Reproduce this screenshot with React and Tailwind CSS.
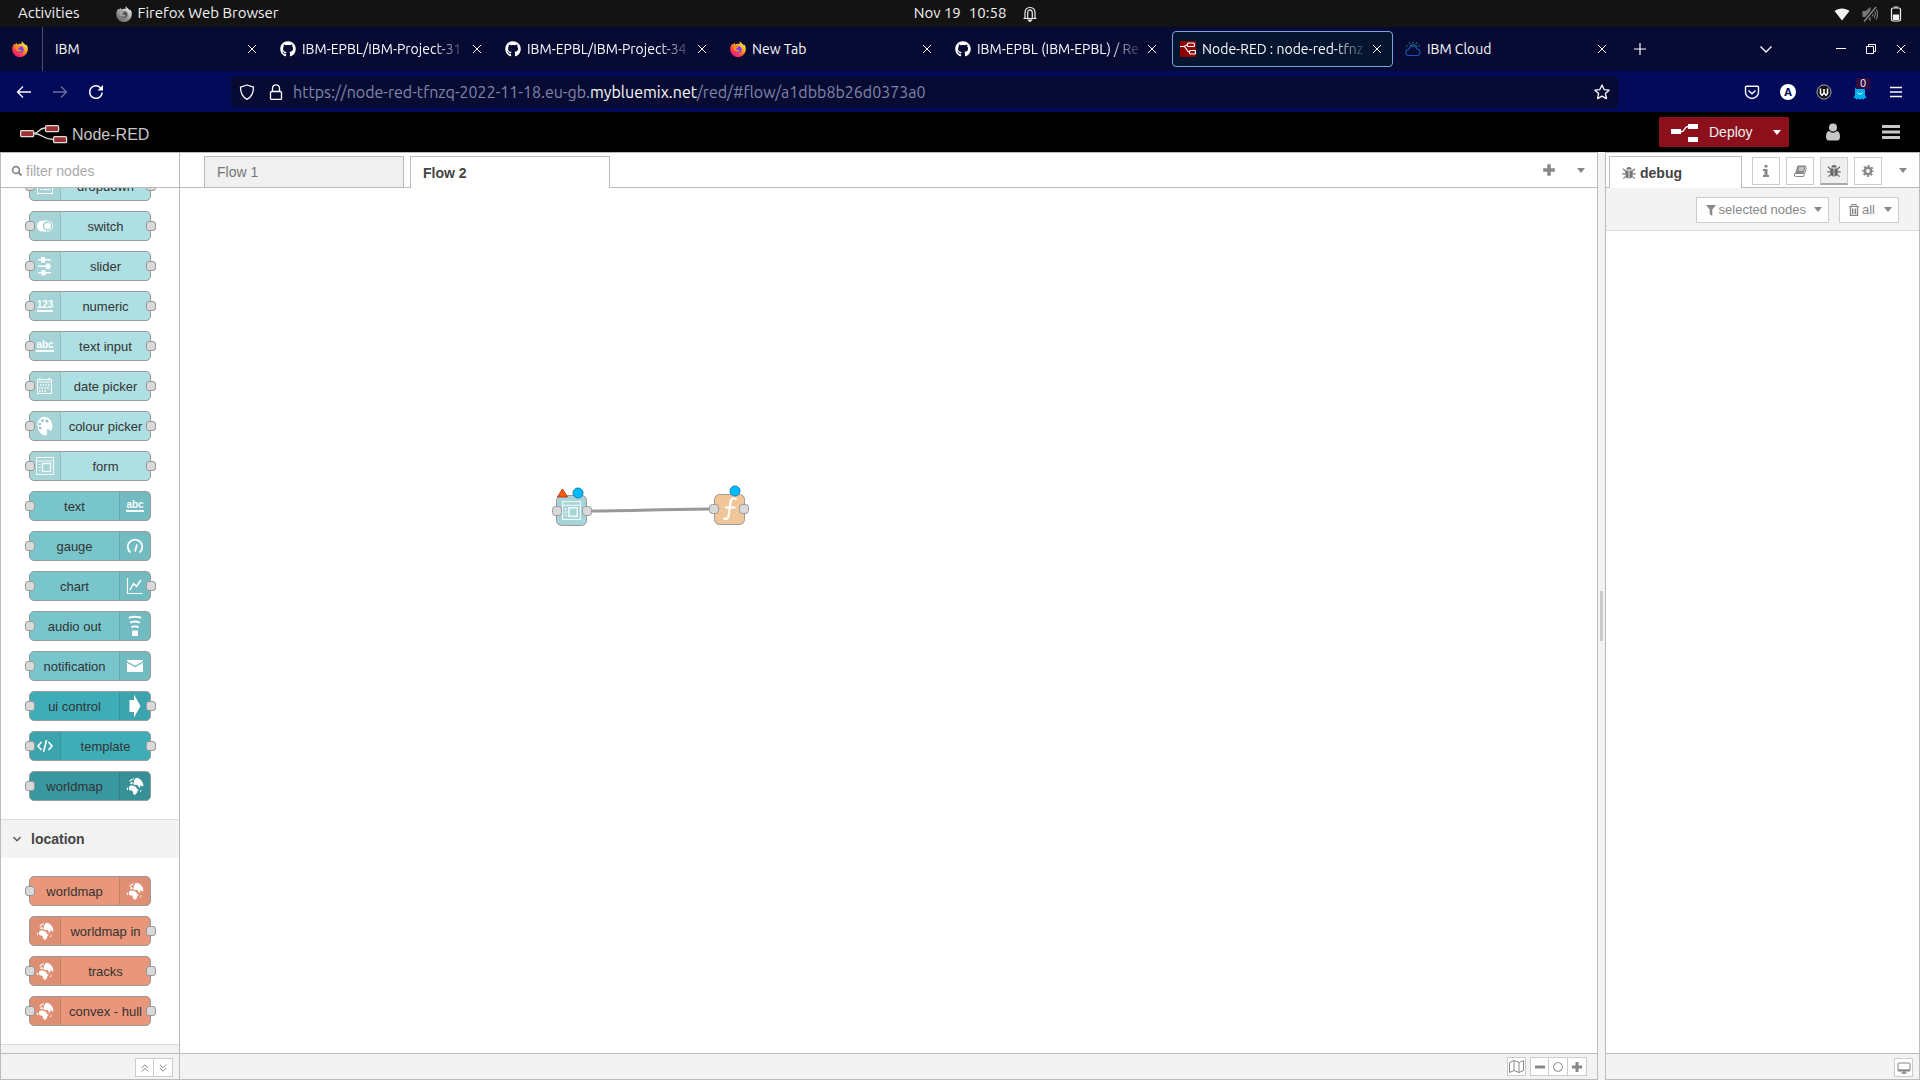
import React from 'react';
import { FaGithub, FaRegCircle } from 'react-icons/fa';

function Firefox({ gray }) {
  const id = gray ? 'fxg' : 'fxc';
  return (
    <svg viewBox="0 0 16 16" className="size-4 shrink-0" aria-hidden="true">
      <defs>
        <linearGradient id={id} x1="0.85" y1="0.1" x2="0.2" y2="0.95">
          <stop offset="0" stopColor={gray ? '#f2f2f2' : '#fff44f'} />
          <stop offset="0.4" stopColor={gray ? '#b0b0b0' : '#ff9a1f'} />
          <stop offset="0.75" stopColor={gray ? '#808080' : '#ff3750'} />
          <stop offset="1" stopColor={gray ? '#6a6a6a' : '#e31587'} />
        </linearGradient>
      </defs>
      <path
        fill={`url(#${id})`}
        d="M10 .2c-.6 1-.5 2 .2 2.9-.7-.3-1.600-.4-2.300-.4-1 0-1.600.3-2.200.8-.7-.3-1.200-.9-1.400-1.700-.6.6-.9 1.300-.9 2-.4-.3-.7-.6-.9-1C1 4.100.2 6.100.2 8.200.2 12.500 3.700 16 8 16s7.800-3.500 7.800-7.800c0-2-.6-3.800-1.600-4.900.1.600.1 1 0 1.400C13 2.800 10.700 2.300 10 .2z"
      />
      <circle cx="8.200" cy="8.600" r="3.400" fill={gray ? '#555' : '#7a3df0'} />
      <path
        fill={gray ? '#a5a5a5' : '#ff8a16'}
        d="M3.300 5.500c1-.6 2.100-.5 2.900 0 .9-.1 1.800.1 2 .5-.3.900-1.800.9-2 1.700.1.900 1 1.500 2.300 1.300.8-.1 1.300.2 1 .7-.6 1-2.700 1.400-4.200.4C3.800 9 3 7.300 3.300 5.500z"
      />
    </svg>
  );
}

function NodeRedFav() {
  return (
    <svg viewBox="0 0 16 16" className="size-4 shrink-0" aria-hidden="true">
      <rect width="16" height="16" rx="1" fill="#8f0000" />
      <g fill="none" stroke="#fff" strokeWidth="1.200">
        <path d="M0 5.500h3.500C6 5.500 6 3.500 8 3.500M3.500 5.500C7 5.500 6 11 9.500 11" />
        <rect x="7.500" y="2" width="7" height="3.500" rx="1" />
        <rect x="9.500" y="9.500" width="6" height="3.500" rx="1" />
      </g>
    </svg>
  );
}

function IbmCloud() {
  return (
    <svg viewBox="0 0 16 16" className="size-4 shrink-0" fill="none" strokeWidth="1.100" aria-hidden="true">
      <path stroke="#1455b5" d="M4 14.500a3 3 0 0 1-.5-6A4.500 4.500 0 0 1 12 8a3.300 3.300 0 0 1 .5 6.500z" />
      <path stroke="#18757c" d="M5 5.500A4 4 0 0 1 12 6M8 .5v1.800M4 1.500l.9 1.500M12 1.500 11.100 3M1 4.500l1.700.8M15 4.500l-1.700.8" />
    </svg>
  );
}

function Cross({ className }) {
  return (
    <svg viewBox="0 0 10 10" className={className} fill="none" stroke="currentColor" aria-hidden="true">
      <path d="M1 1l8 8M9 1l-8 8" />
    </svg>
  );
}

function Caret({ className }) {
  return (
    <svg viewBox="0 0 8 5" className={`h-[5px] w-2 shrink-0 ${className || ''}`} fill="currentColor" aria-hidden="true">
      <path d="M0 0h8L4 5z" />
    </svg>
  );
}

function Plus({ className }) {
  return (
    <svg viewBox="0 0 12 12" className={className} fill="currentColor" aria-hidden="true">
      <path d="M4.500 1h3v3.500H11v3H7.500V11h-3V7.500H1v-3h3.500z" />
    </svg>
  );
}

function Bug() {
  return (
    <svg viewBox="0 0 14 14" className="size-3.5 shrink-0" fill="currentColor" aria-hidden="true">
      <path d="M4.300 3.600a2.700 2.700 0 0 1 5.400 0z" />
      <path d="M3.300 4.500h3.300v8c-2 0-3.300-1.500-3.300-4zM7.400 4.500h3.300v4c0 2.500-1.300 4-3.300 4z" />
      <path fill="none" stroke="currentColor" strokeWidth="1.200" d="M1 2.800l2.700 2.400M13 2.800l-2.700 2.400M.3 7.800h3.200M13.700 7.800h-3.200M1.300 12.600l2.500-2.200M12.700 12.600l-2.500-2.200" />
    </svg>
  );
}

/* ---------- desktop bar ---------- */

function DesktopBar() {
  return (
    <header className="flex h-[27px] shrink-0 items-center bg-[#131313] text-[15px] text-[#f2f2f2]">
      <div className="flex flex-1 items-center pr-4 pl-[18px]">
        <button className="mr-9">Activities</button>
        <button className="flex items-center gap-1.5">
          <Firefox gray />
          Firefox Web Browser
        </button>
      </div>
      <button className="flex gap-2">
        <span>Nov 19</span>
        <span>10:58</span>
      </button>
      <div className="flex flex-1 items-center pr-[18px] pl-4">
        <svg viewBox="0 0 16 16" className="size-4" fill="none" stroke="#eee" strokeWidth="1.200" aria-label="Notifications">
          <path d="M1.500 12.500h13M3 12V7c0-3.500 2-5.500 5-5.500s5 2 5 5.500v5M5.700 12V7c0-2 .8-3.200 2.300-3.200s2.300 1.200 2.300 3.200v5" />
          <path d="M6.500 14h3L8 15.500z" fill="#eee" />
        </svg>
        <div className="ml-auto flex items-center gap-3">
          <svg viewBox="0 0 16 14" className="h-3.5 w-4" fill="#f2f2f2" aria-label="Wi-Fi">
            <path d="M8 13.500L.5 4C4.500.5 11.500.5 15.500 4z" />
          </svg>
          <svg viewBox="0 0 16 16" className="size-4" fill="none" stroke="#777" strokeWidth="1.200" aria-label="Muted">
            <path d="M1 5.500h3L8 2v12l-4-3.500H1z" fill="#777" />
            <path d="M10 5.500c1 1.500 1 3.500 0 5M12 4c1.700 2.500 1.700 5.500 0 8M14 2.500c2 3.500 2 7.500 0 11" />
            <path d="M2 15.500L14 1" stroke="#131313" strokeWidth="3.600" />
            <path d="M2 15.500L14 1" stroke="#888" strokeWidth="1.400" />
          </svg>
          <svg viewBox="0 0 12 16" className="h-4 w-3" fill="none" stroke="#f2f2f2" strokeWidth="1.200" aria-label="Battery">
            <rect x="1.500" y="2" width="9" height="13" rx="1.500" />
            <path d="M4 1h4M3.500 9h5v4.500h-5z" fill="#f2f2f2" />
          </svg>
        </div>
      </div>
    </header>
  );
}

/* ---------- browser chrome ---------- */

const github = <FaGithub className="size-4 shrink-0 text-white" />;
const TABS = [
  { title: 'IBM' },
  { title: 'IBM-EPBL/IBM-Project-31', icon: github, fade: true },
  { title: 'IBM-EPBL/IBM-Project-34', icon: github, fade: true },
  { title: 'New Tab', icon: <Firefox /> },
  { title: 'IBM-EPBL (IBM-EPBL) / Re', icon: github, fade: true },
  { title: 'Node-RED : node-red-tfnz', icon: <NodeRedFav />, fade: true, active: true },
  { title: 'IBM Cloud', icon: <IbmCloud /> },
];

function BrowserTab({ tab }) {
  return (
    <div
      className={`flex h-9 w-[221px] min-w-0 items-center rounded border pr-[7px] pl-[7px] ${
        tab.active ? 'border-[#7ba2e0] bg-[#05142f]' : 'border-transparent'
      }`}
    >
      <button className="flex min-w-0 flex-1 items-center gap-1.5 text-left">
        {tab.icon}
        <span
          className={`min-w-0 flex-1 overflow-hidden whitespace-nowrap ${
            tab.fade ? '[mask-image:linear-gradient(to_right,#000_calc(100%-36px),transparent)]' : ''
          }`}
        >
          {tab.title}
        </span>
      </button>
      <button aria-label="Close tab" className="grid size-4 shrink-0 place-items-center">
        <Cross className="size-2.5" />
      </button>
    </div>
  );
}

function TabStrip() {
  return (
    <div className="flex h-11 shrink-0 items-center bg-[#070b33] text-sm text-[#fbfbfe]">
      <button aria-label="Firefox View" className="grid h-full w-[43px] shrink-0 place-items-center border-r border-[#4b4e6e] pr-0.5">
        <Firefox />
      </button>
      <div className="ml-1 flex min-w-0 gap-1">
        {TABS.map((t, i) => (
          <BrowserTab key={i} tab={t} />
        ))}
      </div>
      <button aria-label="New tab" className="ml-4">
        <svg viewBox="0 0 12 12" className="size-3" stroke="currentColor" strokeWidth="1.200">
          <path d="M6 0v12M0 6h12" />
        </svg>
      </button>
      <div className="ml-auto flex items-center pr-3.5">
        <button aria-label="List all tabs" className="mr-16">
          <svg viewBox="0 0 12 12" className="size-3" fill="none" stroke="currentColor" strokeWidth="1.300">
            <path d="M.5 3.500L6 9l5.500-5.500" />
          </svg>
        </button>
        <div className="flex gap-5">
          <button aria-label="Minimise">
            <svg viewBox="0 0 10 10" className="size-2.5" stroke="currentColor">
              <path d="M0 4.500h10" />
            </svg>
          </button>
          <button aria-label="Restore">
            <svg viewBox="0 0 10 10" className="size-2.5" fill="none" stroke="currentColor">
              <path d="M.5 2.500h7v7h-7zM2.500 2.500v-2h7v7h-2" />
            </svg>
          </button>
          <button aria-label="Close window">
            <Cross className="size-2.5" />
          </button>
        </div>
      </div>
    </div>
  );
}

function NavBar() {
  return (
    <div className="flex h-[41px] shrink-0 items-center bg-[#030a5a] text-[#fbfbfe]">
      <div className="flex w-[231px] shrink-0 items-center gap-5 pl-4">
        <button aria-label="Back">
          <svg viewBox="0 0 16 16" className="size-4" fill="none" stroke="currentColor" strokeWidth="1.300">
            <path d="M15 8H1.500M7 2.500L1.500 8 7 13.500" />
          </svg>
        </button>
        <button aria-label="Forward" className="text-[#6c7099]">
          <svg viewBox="0 0 16 16" className="size-4" fill="none" stroke="currentColor" strokeWidth="1.300">
            <path d="M1 8h13.500M9 2.500L14.500 8 9 13.500" />
          </svg>
        </button>
        <button aria-label="Reload">
          <svg viewBox="0 0 16 16" className="size-4" fill="none" stroke="currentColor" strokeWidth="1.500">
            <path d="M14.200 8.500A6.300 6.300 0 1 1 12.500 3.700" />
            <path d="M15 1v5.500H9.500z" fill="currentColor" stroke="none" />
          </svg>
        </button>
      </div>
      <div className="flex h-8 w-[1387px] min-w-0 items-center rounded bg-[#070b33] pr-2 pl-2">
        <svg viewBox="0 0 16 16" className="mr-3 size-4 shrink-0" fill="none" stroke="currentColor" strokeWidth="1.300" aria-hidden="true">
          <path d="M8 1l6.500 2.200C14.500 9 12.500 13 8 15.300 3.500 13 1.500 9 1.500 3.200z" strokeLinejoin="round" />
        </svg>
        <svg viewBox="0 0 14 16" className="mr-2.5 ml-0.5 h-4 w-3.5 shrink-0" fill="none" stroke="currentColor" strokeWidth="1.300" aria-hidden="true">
          <rect x="1.500" y="7.500" width="11" height="8" rx="1.200" />
          <path d="M3.500 7.500V4.300a3.500 3.500 0 0 1 7 0v3.200" />
        </svg>
        <div role="textbox" aria-label="Address" className="min-w-0 flex-1 overflow-hidden text-base whitespace-nowrap text-[#8085a8]">
          https://node-red-tfnzq-2022-11-18.eu-gb.<span className="text-[#fbfbfe]">mybluemix.net</span>/red/#flow/a1dbb8b26d0373a0
        </div>
        <button aria-label="Bookmark">
          <svg viewBox="0 0 16 16" className="size-4" fill="none" stroke="currentColor" strokeWidth="1.300" strokeLinejoin="round">
            <path d="M8 1l2.100 4.600 5 .6-3.700 3.400 1 5L8 12.100l-4.400 2.500 1-5L.9 6.200l5-.6z" />
          </svg>
        </button>
      </div>
      <div className="ml-auto flex items-center gap-5 pr-4">
        <button aria-label="Pocket">
          <svg viewBox="0 0 16 16" className="size-4" fill="none" stroke="currentColor" strokeWidth="1.400">
            <path d="M1.500 3.300c0-.7.400-1.100 1.100-1.100h10.800c.7 0 1.100.4 1.100 1.100V8a6.500 6.500 0 0 1-13 0zM4.500 6.500L8 9.800l3.500-3.300" />
          </svg>
        </button>
        <button aria-label="Account" className="grid size-4 place-items-center rounded-full bg-white font-sans text-[11px] font-bold text-[#030a5a]">
          A
        </button>
        <button aria-label="Extension W">
          <svg viewBox="0 0 16 16" className="size-4" fill="none">
            <circle cx="8" cy="8" r="7" fill="#111" stroke="#aaa" />
            <path d="M4.500 4.500v5l1.500 1.700 2-2.200 2 2.200 1.500-1.700v-5M8 5v4" stroke="#fff" strokeWidth="1.600" />
          </svg>
        </button>
        <button aria-label="Ghostery" className="relative">
          <svg viewBox="0 0 16 16" className="size-4">
            <path fill="#00aef0" d="M3 6a5 5 0 0 1 10 0v5l1.500 3-2 .3-1 1.500-1.800-1.300L8 15.800l-1.700-1.300-1.800 1.300-1-1.500-2-.3L3 11z" />
            <path d="M5.500 8.500c1 2 4 2 5 0" stroke="#fff" fill="none" />
          </svg>
          <span className="absolute -top-1.5 left-1 h-[11px] w-3.5 bg-[#330a3f] text-center text-[11px] leading-[11px]">0</span>
        </button>
        <button aria-label="Menu">
          <svg viewBox="0 0 16 16" className="size-4" stroke="currentColor" strokeWidth="1.400">
            <path d="M2 3.500h12M2 8h12M2 12.500h12" />
          </svg>
        </button>
      </div>
    </div>
  );
}

/* ---------- Node-RED ---------- */

function AppHeader() {
  return (
    <div className="flex h-10 shrink-0 items-center bg-black text-[#c7c7c7]">
      <svg viewBox="0 0 50 20" className="mt-1 ml-5 h-5 w-[50px]" aria-hidden="true">
        <g fill="none" stroke="#ddd" strokeWidth="1.300">
          <path d="M13 9.500C20 9.500 18 4 25 4M13 9.500C24 9.500 22 15.500 33 15.500" />
          <g fill="#9c3133">
            <rect x=".6" y="6.600" width="13" height="6" rx="1.200" />
            <rect x="25.600" y="1.600" width="13" height="6" rx="1.200" />
            <rect x="33.600" y="12.600" width="13" height="6" rx="1.200" />
          </g>
        </g>
      </svg>
      <span className="mt-1.5 ml-0.5 text-base">Node-RED</span>
      <div className="ml-auto flex h-[30px] w-[130px] items-center bg-[#8c101c] text-sm text-[#eee]">
        <button className="flex h-full flex-1 items-center gap-2.5 pl-3">
          <svg viewBox="0 0 28 20" className="h-5 w-7" fill="#fff" aria-hidden="true">
            <path d="M0 7h10v5H0zM17 2h10v5H17zM17 15h10v5H17z" />
            <path d="M9 9.500h2C14 9.500 13 4.500 17 4.500" fill="none" stroke="#fff" strokeWidth="1.300" />
          </svg>
          Deploy
        </button>
        <button aria-label="Deploy options" className="h-full pr-2 pl-2">
          <Caret className="text-white" />
        </button>
      </div>
      <button aria-label="User" className="ml-[37px]">
        <svg viewBox="0 0 14 18" className="h-[18px] w-3.5" fill="currentColor">
          <path d="M0 13.500C0 10 1.300 8.300 3.300 8a5 5 0 0 0 7.400 0c2 .3 3.300 2 3.300 5.500 0 2.700-1 4-2.800 4H2.800C1 17.500 0 16.200 0 13.500z" />
          <circle cx="7" cy="4.500" r="4" />
        </svg>
      </button>
      <button aria-label="Main menu" className="mr-5 ml-[42px]">
        <svg viewBox="0 0 18 14" className="h-3.5 w-[18px]" fill="currentColor">
          <path d="M0 0h18v3H0zM0 5.500h18v3H0zM0 11h18v3H0z" />
        </svg>
      </button>
    </div>
  );
}

function TextGlyph({ children }) {
  return (
    <span className="border-b-2 border-white pb-px text-[10px] leading-[9px] font-bold text-white">{children}</span>
  );
}

const FormDrawing = (
  <g fill="none" stroke="#fff" opacity="0.85">
    <rect x="1.500" y="1.500" width="17" height="17" />
    <path d="M1.500 5h17" />
    <rect x="7.500" y="7.500" width="8" height="8" strokeWidth="1.400" />
    <path d="M3.500 8.500h2M3.500 11.500h2M3.500 14.500h2" strokeWidth="1.200" />
  </g>
);

const ICONS = {
  dropdown: (
    <svg viewBox="0 0 20 20" className="size-5" fill="none" stroke="#fff">
      <path d="M2.500 2.500h15v15h-15zM2.500 6h15M5 9.500h2M8 9.500h7M5 13.500h2M8 13.500h7" />
    </svg>
  ),
  switch: (
    <svg viewBox="0 0 20 20" className="size-5">
      <rect x="2" y="4.500" width="16" height="11" rx="5.500" fill="#fff" />
      <circle cx="12.500" cy="10" r="4" fill="none" stroke="#8cc4c8" strokeWidth="1.200" />
    </svg>
  ),
  slider: (
    <svg viewBox="0 0 20 20" className="size-5" fill="#fff">
      <path d="M3 3h13v1.500H3zM3 9.500h13V11H3zM3 16h13v1.500H3zM6 1h4v5.500H6zM11 7.500h4V13h-4zM6.500 14.200h4V19.500h-4z" />
    </svg>
  ),
  numeric: <TextGlyph>123</TextGlyph>,
  abc: <TextGlyph>abc</TextGlyph>,
  date: (
    <svg viewBox="0 0 20 20" className="size-5" fill="none" stroke="#fff">
      <path d="M2.500 3.500h14v14h-14zM2.500 6h14M5 1.500v2M14 1.500v2" />
      <path d="M5 9h10M4 12h11M4 15h8" strokeWidth="1.400" strokeDasharray="1.400 1.300" />
    </svg>
  ),
  palette: (
    <svg viewBox="0 0 20 20" className="size-5">
      <path
        fill="#fff"
        d="M9 .8c4.800 0 8.300 4.200 8.300 9.200 0 2.800-.8 4.700-1.800 4.700-1.200 0-1.300-1.700-2.600-1.700-1.200 0-1.300 1.500-.9 3.200.4 1.900-.1 3.200-1.800 3.200C6 19.400 2.500 14.500 2.500 9 2.500 4.500 5 .8 9 .8z"
      />
      <g fill="#8cc4c8">
        <circle cx="7.500" cy="4.600" r="1.400" />
        <circle cx="12" cy="5.200" r="1.400" />
        <circle cx="4.800" cy="8" r="1.300" />
        <circle cx="5.200" cy="12" r="1.300" />
      </g>
    </svg>
  ),
  form: (
    <svg viewBox="0 0 20 20" className="size-5">
      {FormDrawing}
    </svg>
  ),
  gauge: (
    <svg viewBox="0 0 20 20" className="size-5" fill="none" stroke="#fff" strokeWidth="1.800">
      <path d="M5.500 16.500A7.200 7.200 0 1 1 14.500 16.500" />
      <path d="M12 8.500L10 15.500" />
    </svg>
  ),
  chart: (
    <svg viewBox="0 0 20 20" className="size-5" fill="none" stroke="#fff" strokeWidth="1.500">
      <path d="M2.500 2v15.500h15" strokeWidth="1.200" />
      <path d="M5 14l3.500-6.500 3 3L16 4" />
    </svg>
  ),
  audio: (
    <svg viewBox="0 0 20 22" className="h-[22px] w-5" fill="none" stroke="#fff" strokeWidth="1.900">
      <rect x="7" y="15.500" width="6" height="5.500" rx="1" fill="#fff" stroke="none" />
      <path d="M4 3c2-1.700 10-1.700 12 0M5.200 7.700c1.800-1.700 7.800-1.700 9.600 0M6.500 12.500c1.500-1.500 5.500-1.500 7 0" />
    </svg>
  ),
  mail: (
    <svg viewBox="0 0 20 20" className="size-5" fill="#fff">
      <path d="M2 4h16v1.300L10 9.800 2 5.300zM2 6.800l8 4.500 8-4.500V16H2z" />
    </svg>
  ),
  arrow: (
    <svg viewBox="0 0 20 24" className="h-6 w-5" fill="#fff">
      <path d="M4.500 6H9V.5L15.500 12 9 23.500V18H4.500z" />
    </svg>
  ),
  code: (
    <svg viewBox="0 0 20 20" className="size-5" fill="none" stroke="#fff" strokeWidth="1.600">
      <path d="M6.500 6L3 10l3.500 4M13.500 6l3.500 4-3.500 4M11.500 4L8.500 16" />
    </svg>
  ),
  globe: (
    <svg viewBox="0 0 20 20" className="size-5" fill="#fff">
      <path d="M4 5.200L6 3.300l3-1.200-.6 1.300-1.600.6-1 1.500z" />
      <path d="M10.500 1.800c4.200 0 7.700 3.400 7.900 7.700l-1.200 1.300-1.200-1.500-1 .5.300 2-1.300-.4-1.200-2.200-1.800-.5-1.500.3-1.500-1 1-1.700-.3-1.800 1.500-1.200z" />
      <path d="M5.500 6.600l1.700-.7.8 1-1.300 1.300-1.400-.2z" />
      <path d="M4.300 10.300l2.500-1 2.200.6 2 .9 1.200 2.400h1.600l-1.500 2.300-.5 1.800-1.700 1.400-1.500-.2-.8-2.600-.8-1.400-2 .1-1.200-1.800z" />
      <path d="M1.500 11.300l1.300.8.500 1.900-1 .2zM15.200 14.800l1.300-1.200-.4 2-1.300 1z" />
    </svg>
  ),
};

const LIGHT = 'bg-[#aedfe2]';
const MID = 'bg-[#78c6cc]';
const TEAL = 'bg-[#3fadb7]';
const DEEP = 'bg-[#39989f]';
const SALMON = 'bg-[#e9967a]';

const DASHBOARD = [
  ['dropdown', LIGHT, 'dropdown', 'left', true, true],
  ['switch', LIGHT, 'switch', 'left', true, true],
  ['slider', LIGHT, 'slider', 'left', true, true],
  ['numeric', LIGHT, 'numeric', 'left', true, true],
  ['text input', LIGHT, 'abc', 'left', true, true],
  ['date picker', LIGHT, 'date', 'left', true, true],
  ['colour picker', LIGHT, 'palette', 'left', true, true],
  ['form', LIGHT, 'form', 'left', true, true],
  ['text', MID, 'abc', 'right', true, false],
  ['gauge', MID, 'gauge', 'right', true, false],
  ['chart', MID, 'chart', 'right', true, true],
  ['audio out', MID, 'audio', 'right', true, false],
  ['notification', MID, 'mail', 'right', true, false],
  ['ui control', TEAL, 'arrow', 'right', true, true],
  ['template', TEAL, 'code', 'left', true, true],
  ['worldmap', DEEP, 'globe', 'right', true, false],
];
const LOCATION = [
  ['worldmap', SALMON, 'globe', 'right', true, false],
  ['worldmap in', SALMON, 'globe', 'left', false, true],
  ['tracks', SALMON, 'globe', 'left', true, true],
  ['convex - hull', SALMON, 'globe', 'left', true, true],
];

function Port({ side }) {
  return (
    <span
      className={`absolute top-[9px] size-2.5 rounded-[3px] border border-[#999] bg-[#d9d9d9] ${
        side === 'in' ? '-left-[5px]' : '-right-[6px]'
      }`}
    />
  );
}

function PaletteNode({ node }) {
  const [label, color, icon, side, input, output] = node;
  return (
    <div className={`relative flex h-[30px] w-[122px] shrink-0 rounded-[5px] border border-[#999] ${color} ${side === 'right' ? 'flex-row-reverse' : ''}`}>
      <div
        className={`grid w-[31px] shrink-0 place-items-center bg-black/5 ${
          side === 'right' ? 'rounded-r border-l border-black/10' : 'rounded-l border-r border-black/10'
        }`}
      >
        {ICONS[icon]}
      </div>
      <div className="flex-1 text-center text-[13px] leading-[30px] whitespace-nowrap text-[#333]">{label}</div>
      {input && <Port side="in" />}
      {output && <Port side="out" />}
    </div>
  );
}

function Palette() {
  return (
    <aside className="flex w-[180px] shrink-0 flex-col border border-[#bbb]">
      <label className="flex h-[35px] shrink-0 items-center border-b border-[#bbb] pt-0.5 pl-2.5">
        <svg viewBox="0 0 12 12" className="size-3 shrink-0" fill="none" stroke="#888" strokeWidth="1.700" aria-hidden="true">
          <circle cx="5" cy="5" r="3.400" />
          <path d="M7.500 7.500L10.500 10.500" strokeWidth="2" />
        </svg>
        <input
          type="text"
          aria-label="filter nodes"
          placeholder="filter nodes"
          className="ml-[3px] w-full min-w-0 text-sm outline-none placeholder:text-[#aaa]"
        />
      </label>
      <div className="flex min-h-0 flex-1 flex-col overflow-hidden">
        <div className="-mt-[17px] flex flex-col items-center gap-2.5 pb-[18px]">
          {DASHBOARD.map((n) => (
            <PaletteNode key={n[0]} node={n} />
          ))}
        </div>
        <button className="flex h-[39px] shrink-0 items-center border-t border-[#ddd] bg-[#f3f3f3] pl-3 text-left text-sm font-bold text-[#444]">
          <svg viewBox="0 0 8 6" className="mr-2.5 h-1.5 w-2" fill="none" stroke="#555" strokeWidth="1.300" aria-hidden="true">
            <path d="M.5 1L4 4.700 7.500 1" />
          </svg>
          location
        </button>
        <div className="flex flex-col items-center gap-2.5 py-[18px]">
          {LOCATION.map((n) => (
            <PaletteNode key={n[0]} node={n} />
          ))}
        </div>
        <div className="min-h-0 flex-1 border-t border-[#ddd] bg-[#f3f3f3]" />
      </div>
      <footer className="flex h-[26px] shrink-0 items-center justify-end border-t border-[#bbb] bg-[#f3f3f3] pt-0.5 pr-1.5">
        <FootButton label="Collapse all">
          <svg viewBox="0 0 8 8" className="size-2" fill="none" stroke="currentColor">
            <path d="M.8 4L4 .8 7.200 4M.8 7.500L4 4.300l3.200 3.200" />
          </svg>
        </FootButton>
        <FootButton label="Expand all" joined>
          <svg viewBox="0 0 8 8" className="size-2" fill="none" stroke="currentColor">
            <path d="M.8.5L4 3.700 7.200.5M.8 4L4 7.200 7.200 4" />
          </svg>
        </FootButton>
      </footer>
    </aside>
  );
}

function FootButton({ label, joined, children }) {
  return (
    <button
      aria-label={label}
      className={`grid h-[19px] w-[19px] place-items-center border border-[#ccc] bg-white text-[#888] ${joined ? 'border-l-0' : ''}`}
    >
      {children}
    </button>
  );
}

function FlowCanvas() {
  return (
    <svg className="block h-full w-full" aria-label="Flow 2">
      <path d="M411 323C450 323 490 321 530 321" fill="none" stroke="#999" strokeWidth="3" />
      <g stroke="#999">
        <rect x="376.500" y="307.500" width="30" height="30" rx="5" fill="#a6d4d8" />
        <rect x="534.500" y="306.500" width="30" height="30" rx="5" fill="#f0c59a" />
      </g>
      <g transform="translate(381 312) scale(1.050)">{FormDrawing}</g>
      <path
        d="M556.500 311.500c-3-2.500-5.500-1-6 2.500l-1.800 13.500c-.5 3.500-2.500 4.500-5.200 2.500M545 319.500h10.500"
        fill="none"
        stroke="#fff"
        strokeWidth="2.200"
      />
      <g fill="#d9d9d9" stroke="#999">
        <rect x="372.500" y="318.500" width="9" height="9" rx="3" />
        <rect x="402.500" y="318.500" width="9" height="9" rx="3" />
        <rect x="529.500" y="316.500" width="9" height="9" rx="3" />
        <rect x="559.500" y="316.500" width="9" height="9" rx="3" />
      </g>
      <g fill="#00bcff" stroke="#1b7fb5">
        <circle cx="398" cy="305" r="5" />
        <circle cx="555" cy="303" r="5" />
      </g>
      <path d="M382.500 301L387.500 309h-10z" fill="#ff5a00" stroke="#b53a1b" strokeLinejoin="round" />
    </svg>
  );
}

function Workspace() {
  return (
    <main className="flex min-w-0 flex-1 flex-col border-y border-r border-[#bbb]">
      <div className="flex h-[35px] shrink-0 items-end border-b border-[#bbb] pl-6 text-sm">
        <button className="-mb-px h-8 w-[200px] border border-[#bbb] bg-[#f0f0f0] pl-3 text-left text-[#777]">Flow 1</button>
        <button className="-mb-px ml-1.5 h-8 w-[200px] border border-b-0 border-[#bbb] bg-white pl-3 text-left font-bold text-[#444]">
          Flow 2
        </button>
        <div className="ml-auto flex h-full items-center text-[#888]">
          <button aria-label="Add flow">
            <Plus className="size-3.5" />
          </button>
          <button aria-label="List flows" className="mr-3 ml-[21px]">
            <Caret />
          </button>
        </div>
      </div>
      <div className="min-h-0 flex-1">
        <FlowCanvas />
      </div>
      <footer className="flex h-[26px] shrink-0 items-center justify-end border-t border-[#bbb] bg-[#f3f3f3] pr-2.5">
        <div className="mr-1">
          <FootButton label="Toggle navigator">
            <svg viewBox="0 0 15 13" className="h-[13px] w-[15px]" fill="none" stroke="currentColor">
              <path d="M.5 2.500l4.500-2 5 2 4.500-2v10l-4.500 2-5-2-4.500 2zM5 .5v10M10 2.500v10" />
            </svg>
          </FootButton>
        </div>
        <FootButton label="Zoom out">
          <svg viewBox="0 0 10 10" className="size-2.5" fill="currentColor">
            <path d="M0 3.500h10v3H0z" />
          </svg>
        </FootButton>
        <FootButton label="Zoom reset" joined>
          <FaRegCircle className="size-2.5" />
        </FootButton>
        <FootButton label="Zoom in" joined>
          <Plus className="size-3" />
        </FootButton>
      </footer>
    </main>
  );
}

function SideTab({ label, active, children }) {
  return (
    <button
      aria-label={label}
      className={`grid size-7 place-items-center border ${
        active ? 'border-[#ccc] border-b-2 border-b-[#aaa] bg-[#efefef] text-[#666]' : 'border-[#ccc] bg-white text-[#888]'
      }`}
    >
      {children}
    </button>
  );
}

function Sidebar() {
  return (
    <aside className="flex w-[315px] shrink-0 flex-col border border-[#bbb]">
      <div className="flex h-[35px] shrink-0 items-end border-b border-[#bbb] pl-[3px] text-sm">
        <button className="-mb-px flex h-8 w-[133px] items-center gap-1 border border-b-0 border-[#bbb] bg-white pl-3 font-bold text-[#444]">
          <span className="text-[#777]">
            <Bug />
          </span>
          debug
        </button>
        <div className="mb-0.5 ml-2.5 flex gap-1.5">
          <SideTab label="Information">
            <svg viewBox="0 0 6 12" className="h-3 w-1.5" fill="currentColor">
              <path d="M1.500 0h3v2.500h-3zM0 4h4.500v6H6v2H0v-2h1.500V6H0z" />
            </svg>
          </SideTab>
          <SideTab label="Help">
            <svg viewBox="0 0 14 12" className="h-3 w-3.5">
              <path d="M4.500.5H13L10.500 9H2z" fill="currentColor" />
              <path d="M2.500 7.500C1 9 1 11.500 2.500 11.500h8L13.500 2.500" fill="none" stroke="currentColor" />
              <path d="M6 3h5M5.500 5h5" stroke="#fff" />
            </svg>
          </SideTab>
          <SideTab label="Debug messages" active>
            <Bug />
          </SideTab>
          <SideTab label="Configuration nodes">
            <svg viewBox="0 0 12 12" className="size-3" fill="none" stroke="currentColor">
              <circle cx="6" cy="6" r="3.200" strokeWidth="2.600" />
              <circle cx="6" cy="6" r="5.100" strokeWidth="1.600" strokeDasharray="2 2" strokeDashoffset="1" />
            </svg>
          </SideTab>
        </div>
        <button aria-label="More tabs" className="mr-3 mb-3.5 ml-auto text-[#888]">
          <Caret />
        </button>
      </div>
      <div className="flex h-[43px] shrink-0 items-center justify-end gap-2.5 border-b border-[#ddd] bg-[#f3f3f3] pt-px pr-5 text-[13px] text-[#888]">
        <button className="flex h-[26px] items-center border border-[#ccc] bg-white pr-1.5 pl-2">
          <svg viewBox="0 0 12 12" className="mr-0.5 size-3" fill="currentColor" aria-hidden="true">
            <path d="M1 1h10L7.300 5.500V12L4.700 10V5.500z" />
          </svg>
          selected nodes
          <Caret className="ml-2" />
        </button>
        <button className="flex h-[26px] w-[60px] items-center border border-[#ccc] bg-white pr-1.5 pl-2">
          <svg viewBox="0 0 12 12" className="mr-0.5 size-3" fill="none" stroke="currentColor" aria-hidden="true">
            <path d="M1 2.500h10M4 2.500v-2h4v2" strokeWidth="1.200" />
            <path d="M2.500 3v8.500h7V3M4.700 4.500V10M7.300 4.500V10" strokeWidth="1.400" />
          </svg>
          all
          <Caret className="ml-auto" />
        </button>
      </div>
      <div className="flex-1" />
      <footer className="flex h-[26px] shrink-0 items-center justify-end border-t border-[#bbb] bg-[#f3f3f3] pt-0.5 pr-1.5">
        <FootButton label="Open in new window">
          <svg viewBox="0 0 14 12" className="h-3 w-3.5" fill="none" stroke="currentColor">
            <rect x="1" y="1" width="12" height="8" rx=".6" />
            <path d="M1 8.200h12" strokeWidth="1.800" />
            <path d="M7 9v2M4.500 11h5" strokeWidth="1.400" />
          </svg>
        </FootButton>
      </footer>
    </aside>
  );
}

export default function App() {
  return (
    <div className="flex h-screen flex-col overflow-hidden bg-white">
      <div className="shrink-0 font-['Ubuntu','Noto_Sans',sans-serif]">
        <DesktopBar />
        <TabStrip />
        <NavBar />
      </div>
      <div className="flex min-h-0 flex-1 flex-col font-['Liberation_Sans',Arial,sans-serif]">
        <AppHeader />
        <div className="flex min-h-0 flex-1">
          <Palette />
          <Workspace />
          <div className="flex w-[7px] shrink-0 items-center justify-center bg-[#f3f3f3]">
            <div className="h-[50px] w-[3px] bg-[#ccc]" />
          </div>
          <Sidebar />
        </div>
      </div>
    </div>
  );
}
